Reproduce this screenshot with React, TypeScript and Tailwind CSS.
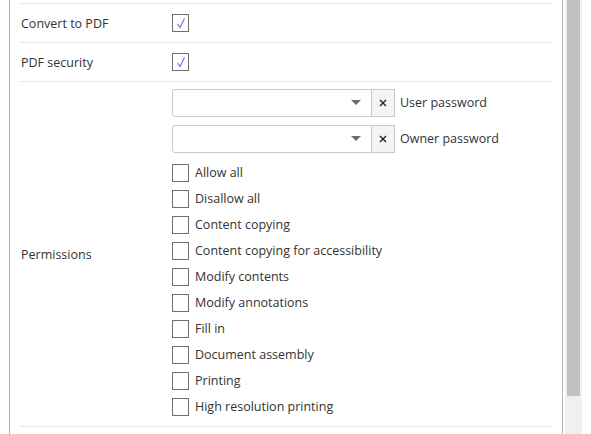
import React from 'react';

const permissions = [
    'Allow all',
    'Disallow all',
    'Content copying',
    'Content copying for accessibility',
    'Modify contents',
    'Modify annotations',
    'Fill in',
    'Document assembly',
    'Printing',
    'High resolution printing',
];

function CheckBox({ checked }: { checked?: boolean }) {
    return (
        <div className="w-[17px] h-[18px] border border-[#6e6e6e] bg-white flex items-center justify-center">
            {checked && (
                <svg width="12" height="12" viewBox="0 0 12 12">
                    <path d="M2.5 7 L5 10.5 L9.5 1.5" fill="none" stroke="#5b72d6" strokeWidth="1.1" />
                </svg>
            )}
        </div>
    );
}

function PasswordField({ label }: { label: string }) {
    return (
        <div className="flex items-center">
            <div className="w-[200px] h-[28px] border border-[#c8c8c8] rounded-l-[3px] bg-white flex items-center justify-end pr-[10px]">
                <svg width="10" height="6" viewBox="0 0 10 6">
                    <path d="M0 0 L10 0 L5 5 Z" fill="#6b6b6b" />
                </svg>
            </div>
            <div className="w-[23px] h-[28px] border border-l-0 border-[#c8c8c8] bg-[#f4f4f4] flex items-center justify-center">
                <svg width="8" height="8" viewBox="0 0 8 8">
                    <path d="M1 1 L7 7 M7 1 L1 7" stroke="#222" strokeWidth="1.4" />
                </svg>
            </div>
            <span className="ml-[5px] pt-[2px]">{label}</span>
        </div>
    );
}

export default function App() {
    return (
        <div
            className="w-[591px] h-[434px] overflow-hidden bg-white flex text-[12.5px] text-[#333]"
            style={{ fontFamily: '"Segoe UI", "Open Sans", sans-serif' }}
        >
            <div className="w-[9px]" />
            {/* panel */}
            <div className="w-[554px] h-full border-x border-[#b4b4b4] pl-[10px] pr-[9px] pt-[3px]">
                <div className="border-t border-[#e8e8e8]" />
                {/* Convert to PDF */}
                <div className="h-[39px] flex items-center border-b border-[#e8e8e8]">
                    <div className="w-[152px] pl-[1px] pt-[2px]">Convert to PDF</div>
                    <CheckBox checked />
                </div>
                {/* PDF security */}
                <div className="h-[39px] flex items-center border-b border-[#e8e8e8]">
                    <div className="w-[152px] pl-[1px] pt-[2px]">PDF security</div>
                    <CheckBox checked />
                </div>
                {/* Permissions */}
                <div className="h-[345px] flex items-center border-b border-[#e8e8e8]">
                    <div className="w-[152px] pl-[1px] pt-[2px]">Permissions</div>
                    <div className="flex flex-col pt-[6px] pb-[6px]">
                        <div className="flex flex-col gap-[8px]">
                            <PasswordField label="User password" />
                            <PasswordField label="Owner password" />
                        </div>
                        <div className="flex flex-col mt-[7px]">
                            {permissions.map((p) => (
                                <div key={p} className="h-[26px] flex items-center gap-[6px]">
                                    <CheckBox />
                                    <span className="pt-[1px]">{p}</span>
                                </div>
                            ))}
                        </div>
                    </div>
                </div>
            </div>
            <div className="w-[2px]" />
            {/* scrollbar */}
            <div className="w-[17px] h-full bg-[#f0f0f0] px-[2px]">
                <div className="h-[396px] bg-[#c1c1c1]" />
            </div>
        </div>
    );
}
